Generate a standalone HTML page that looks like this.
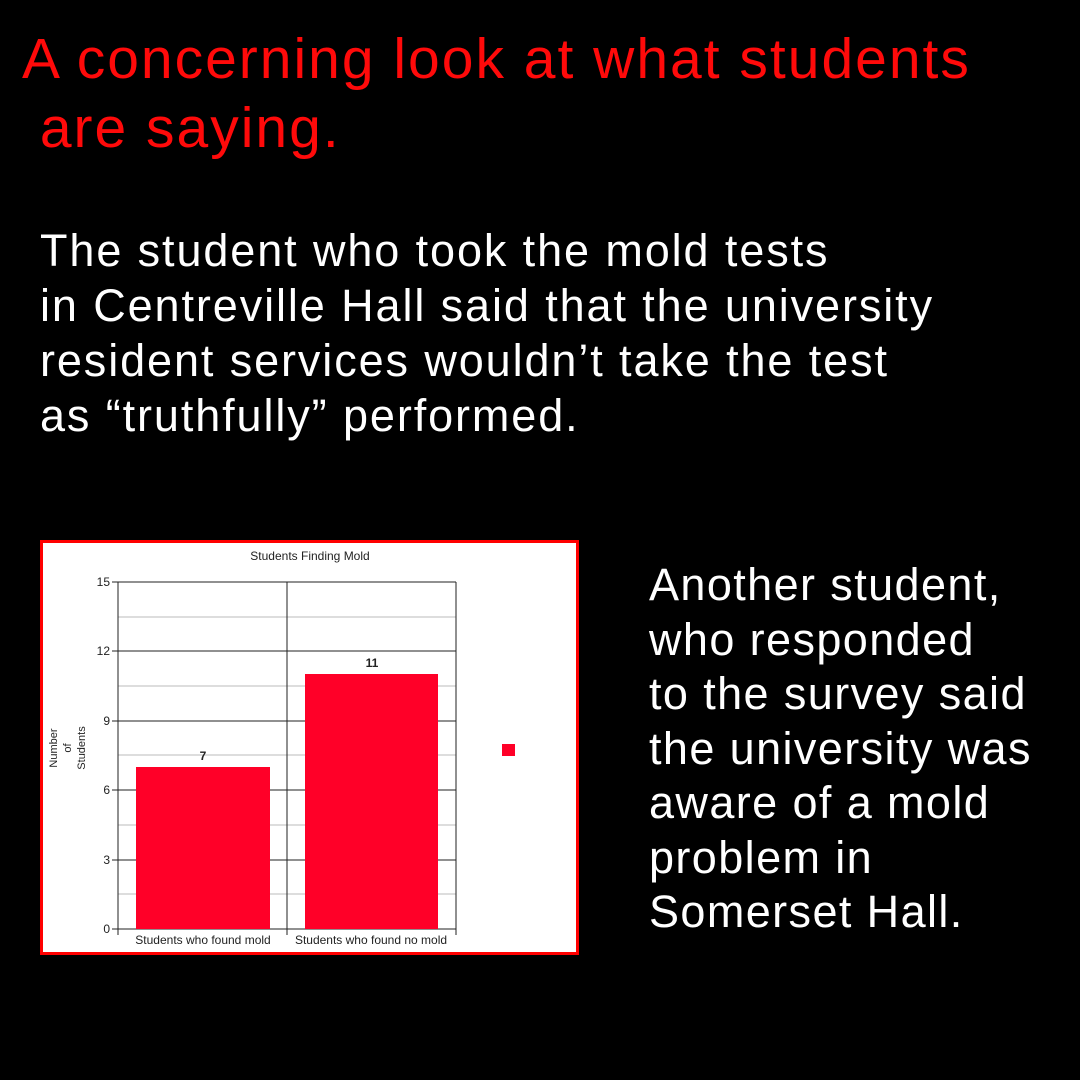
<!DOCTYPE html>
<html><head><meta charset="utf-8"><style>
html,body{margin:0;padding:0;background:#000;}
body{width:1080px;height:1080px;position:relative;overflow:hidden;font-family:"Liberation Sans",sans-serif;}
.t{position:absolute;white-space:nowrap;}
#h{left:22px;top:25px;color:#ff0a0a;font-size:57px;line-height:69px;letter-spacing:2px;}
#b{left:40px;top:223px;color:#fff;font-size:45px;line-height:55px;letter-spacing:1.9px;}
#r{left:649px;top:558px;color:#fff;font-size:45px;line-height:54.5px;letter-spacing:1.4px;}
#chart{position:absolute;left:40px;top:540px;width:533px;height:409px;border:3px solid #f00;background:#fff;}
</style></head><body>
<div class="t" id="h">A concerning look at what students<br>&nbsp;are saying.</div>
<div class="t" id="b">The student who took the mold tests<br>in Centreville Hall said that the university<br>resident services wouldn’t take the test<br>as “truthfully” performed.</div>
<div class="t" id="r">Another student,<br>who responded<br>to the survey said<br>the university was<br>aware of a mold<br>problem in<br>Somerset Hall.</div>
<div id="chart"></div>
<svg style="position:absolute;left:0;top:0" width="1080" height="1080" font-family="Liberation Sans, sans-serif">
<g stroke="#bbb" stroke-width="1">
<line x1="118" y1="617" x2="456" y2="617"/><line x1="118" y1="686" x2="456" y2="686"/>
<line x1="118" y1="755" x2="456" y2="755"/><line x1="118" y1="825" x2="456" y2="825"/>
<line x1="118" y1="894" x2="456" y2="894"/>
</g>
<g stroke="#222" stroke-width="1">
<line x1="112" y1="582" x2="456" y2="582"/><line x1="112" y1="651" x2="456" y2="651"/>
<line x1="112" y1="721" x2="456" y2="721"/><line x1="112" y1="790" x2="456" y2="790"/>
<line x1="112" y1="860" x2="456" y2="860"/><line x1="112" y1="929" x2="456" y2="929"/>
<line x1="118" y1="582" x2="118" y2="935"/><line x1="287" y1="582" x2="287" y2="935"/>
<line x1="456" y1="582" x2="456" y2="935"/>
</g>
<rect x="136" y="767" width="134" height="162" fill="#ff0028"/>
<rect x="305" y="674" width="133" height="255" fill="#ff0028"/>
<rect x="502" y="744" width="13" height="12" fill="#ff0028"/>
<g font-size="12" fill="#222">
<text x="310" y="560" text-anchor="middle">Students Finding Mold</text>
<text x="110" y="586" text-anchor="end">15</text><text x="110" y="655" text-anchor="end">12</text>
<text x="110" y="725" text-anchor="end">9</text><text x="110" y="794" text-anchor="end">6</text>
<text x="110" y="864" text-anchor="end">3</text><text x="110" y="933" text-anchor="end">0</text>
<text x="203" y="944" text-anchor="middle">Students who found mold</text>
<text x="371" y="944" text-anchor="middle">Students who found no mold</text>
<text x="203" y="760" text-anchor="middle" font-weight="bold">7</text>
<text x="372" y="667" text-anchor="middle" font-weight="bold">11</text>
<g transform="translate(80,748) rotate(-90)" text-anchor="middle" font-size="11">
<text x="0" y="-23">Number</text><text x="0" y="-9">of</text><text x="0" y="5">Students</text>
</g>
</g>
</svg>
</body></html>
